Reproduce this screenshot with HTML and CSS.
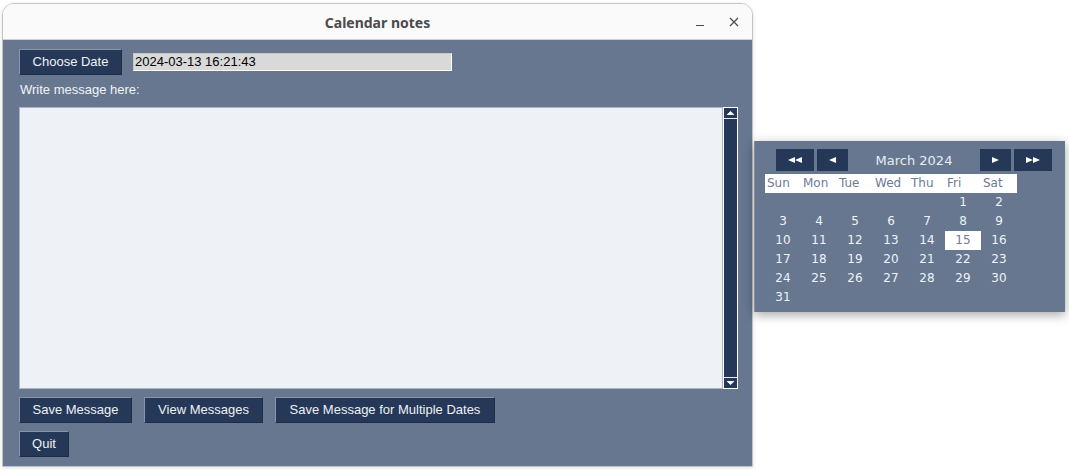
FILE: index.html
```html
<!DOCTYPE html>
<html>
<head>
<meta charset="utf-8">
<title>Calendar notes</title>
<link rel="stylesheet" href="styles.css">
</head>
<body>
<div class="desktop">
  <div class="window">
    <div class="titlebar">
      <span></span>
      <span class="title">Calendar notes</span>
      <div class="controls">
        <svg class="ctl" width="10" height="10" viewBox="0 0 10 10"><line x1="1" y1="8.5" x2="9" y2="8.5" stroke="#4a4a4a" stroke-width="1"/></svg>
        <svg class="ctl" width="10" height="10" viewBox="0 0 10 10"><path d="M1 1 L9 9 M9 1 L1 9" stroke="#4a4a4a" stroke-width="1.2" fill="none"/></svg>
      </div>
    </div>
    <div class="body">
      <div class="row">
        <button class="btn">Choose Date</button>
        <div class="entry">2024-03-13 16:21:43</div>
      </div>
      <div class="label">Write message here:</div>
      <div class="editor">
        <div class="textarea"></div>
        <div class="scrollbar">
          <div class="sb-btn"><svg width="9" height="6" viewBox="0 0 9 6"><path d="M0.5 5 L4.5 1 L8.5 5 Z" fill="#fff"/></svg></div>
          <div class="sb-trough"></div>
          <div class="sb-btn"><svg width="9" height="6" viewBox="0 0 9 6"><path d="M0.5 1 L4.5 5 L8.5 1 Z" fill="#fff"/></svg></div>
        </div>
      </div>
      <div class="row actions">
        <button class="btn">Save Message</button>
        <button class="btn">View Messages</button>
        <button class="btn">Save Message for Multiple Dates</button>
      </div>
      <div class="row">
        <button class="btn btn-quit">Quit</button>
      </div>
    </div>
  </div>

  <div class="popup">
    <div class="nav">
      <div class="navbtn wide"><svg width="14" height="6" viewBox="0 0 14 6"><path d="M0 3 L7 0 L7 6 Z M7 3 L14 0 L14 6 Z" fill="#fff"/></svg></div>
      <div class="navbtn"><svg width="7" height="6" viewBox="0 0 7 6"><path d="M0 3 L7 0 L7 6 Z" fill="#fff"/></svg></div>
      <div class="month">March 2024</div>
      <div class="navbtn"><svg width="7" height="6" viewBox="0 0 7 6"><path d="M7 3 L0 0 L0 6 Z" fill="#fff"/></svg></div>
      <div class="navbtn wide"><svg width="14" height="6" viewBox="0 0 14 6"><path d="M7 3 L0 0 L0 6 Z M14 3 L7 0 L7 6 Z" fill="#fff"/></svg></div>
    </div>
    <div class="weekdays">
      <span>Sun</span><span>Mon</span><span>Tue</span><span>Wed</span><span>Thu</span><span>Fri</span><span>Sat</span>
    </div>
    <div class="days">
      <span></span><span></span><span></span><span></span><span></span><span>1</span><span>2</span>
      <span>3</span><span>4</span><span>5</span><span>6</span><span>7</span><span>8</span><span>9</span>
      <span>10</span><span>11</span><span>12</span><span>13</span><span>14</span><span class="sel">15</span><span>16</span>
      <span>17</span><span>18</span><span>19</span><span>20</span><span>21</span><span>22</span><span>23</span>
      <span>24</span><span>25</span><span>26</span><span>27</span><span>28</span><span>29</span><span>30</span>
      <span>31</span>
    </div>
  </div>
</div>
</body>
</html>
```

FILE: styles.css
```css
* { box-sizing: border-box; }

body {
  margin: 0;
  background: #ffffff;
  font-family: "Liberation Sans", Arial, sans-serif;
  font-size: 13px;
}

.desktop {
  position: relative;
  width: 1069px;
  height: 470px;
  overflow: hidden;
  background: #ffffff;
}

.window {
  position: absolute;
  left: 2px;
  top: 3px;
  width: 751px;
  height: 464px;
  border: 1px solid #c4c4c4;
  border-radius: 12px 12px 0 0;
  overflow: hidden;
  display: flex;
  flex-direction: column;
  box-shadow: 0 1px 4px rgba(0,0,0,0.12);
}

.titlebar {
  height: 36px;
  flex: none;
  background: #fafafa;
  border-bottom: 1px solid #cfcfcf;
  display: grid;
  grid-template-columns: 1fr auto 1fr;
  align-items: center;
}

.title {
  font-family: "Noto Sans", "DejaVu Sans", sans-serif;
  font-weight: bold;
  font-size: 14px;
  color: #4b4b4b;
  padding-top: 1px;
}

.controls {
  display: flex;
  justify-content: flex-end;
  align-items: center;
  gap: 24px;
  padding-right: 13px;
}

.ctl { display: block; }

.body {
  flex: 1;
  background: #66778f;
  padding: 9px 14px 8px 16px;
  display: flex;
  flex-direction: column;
}

.row {
  display: flex;
  align-items: center;
}

.btn {
  height: 26px;
  padding: 0 12px;
  background: #253858;
  color: #eef1f6;
  font-family: "Liberation Sans", Arial, sans-serif;
  font-size: 13px;
  border: 1px solid #8793a8;
  border-right-color: #1e2d47;
  border-bottom-color: #1e2d47;
  border-radius: 0;
  margin: 0;
  line-height: 22px;
  white-space: nowrap;
}

.row .btn:first-child { width: 103px; }
.actions .btn:nth-child(1) { width: 113px; }
.actions .btn:nth-child(2) { width: 119px; }
.actions .btn:nth-child(3) { width: 220px; }
.row .btn.btn-quit { width: 50px; padding: 0; }

.entry {
  margin-left: 11px;
  width: 319px;
  height: 18px;
  background: #d9d9d9;
  border: 1px solid #ffffff;
  border-top-color: #c6c6c6;
  border-left-color: #c6c6c6;
  color: #000;
  font-size: 13px;
  line-height: 16px;
  padding-left: 1px;
}

.label {
  margin-top: 6px;
  height: 17px;
  line-height: 17px;
  color: #f2f4f8;
  padding-left: 1px;
}

.editor {
  margin-top: 9px;
  display: flex;
  height: 282px;
}

.textarea {
  flex: none;
  width: 704px;
  height: 100%;
  background: #eef2f7;
  border: 1px solid #a9b3c2;
}

.scrollbar {
  flex: none;
  width: 15px;
  height: 100%;
  background: #253858;
  border: 1px solid #ffffff;
  display: flex;
  flex-direction: column;
}

.sb-btn {
  height: 10px;
  flex: none;
  display: flex;
  align-items: center;
  justify-content: center;
  background: #253858;
}

.sb-btn:first-child { border-bottom: 1px solid #e6e9ef; height: 11px; }
.sb-btn:last-child { border-top: 1px solid #e6e9ef; height: 11px; }

.sb-trough { flex: 1; }

.actions {
  margin-top: 8px;
  gap: 12px;
}

.actions + .row { margin-top: 8px; }

/* calendar popup */
.popup {
  position: absolute;
  left: 754px;
  top: 141px;
  width: 311px;
  height: 171px;
  background: #66778f;
  border-left: 1px solid #8391a6;
  box-shadow: 0 3px 10px rgba(0,0,0,0.35);
  padding: 8px 0 0 10px;
  font-family: "DejaVu Sans", sans-serif;
  font-size: 12px;
}

.nav {
  display: flex;
  align-items: center;
  height: 22px;
  padding-left: 11px;
}

.navbtn {
  width: 31px;
  height: 22px;
  background: #253858;
  display: flex;
  align-items: center;
  justify-content: center;
}

.navbtn.wide { width: 38px; }
.navbtn + .navbtn { margin-left: 3px; }

.month {
  width: 132px;
  text-align: center;
  color: #e8edf4;
  font-size: 13px;
}

.weekdays {
  margin-top: 3px;
  width: 252px;
  height: 19px;
  background: #ffffff;
  display: grid;
  grid-template-columns: repeat(7, 36px);
  line-height: 19px;
  color: #6b7b93;
}

.weekdays span { padding-left: 2px; }

.days {
  display: grid;
  grid-template-columns: repeat(7, 36px);
  grid-auto-rows: 19px;
  width: 252px;
  line-height: 19px;
  color: #eef3fa;
  text-align: center;
}

.days .sel {
  background: #ffffff;
  color: #6b7b93;
}
```
